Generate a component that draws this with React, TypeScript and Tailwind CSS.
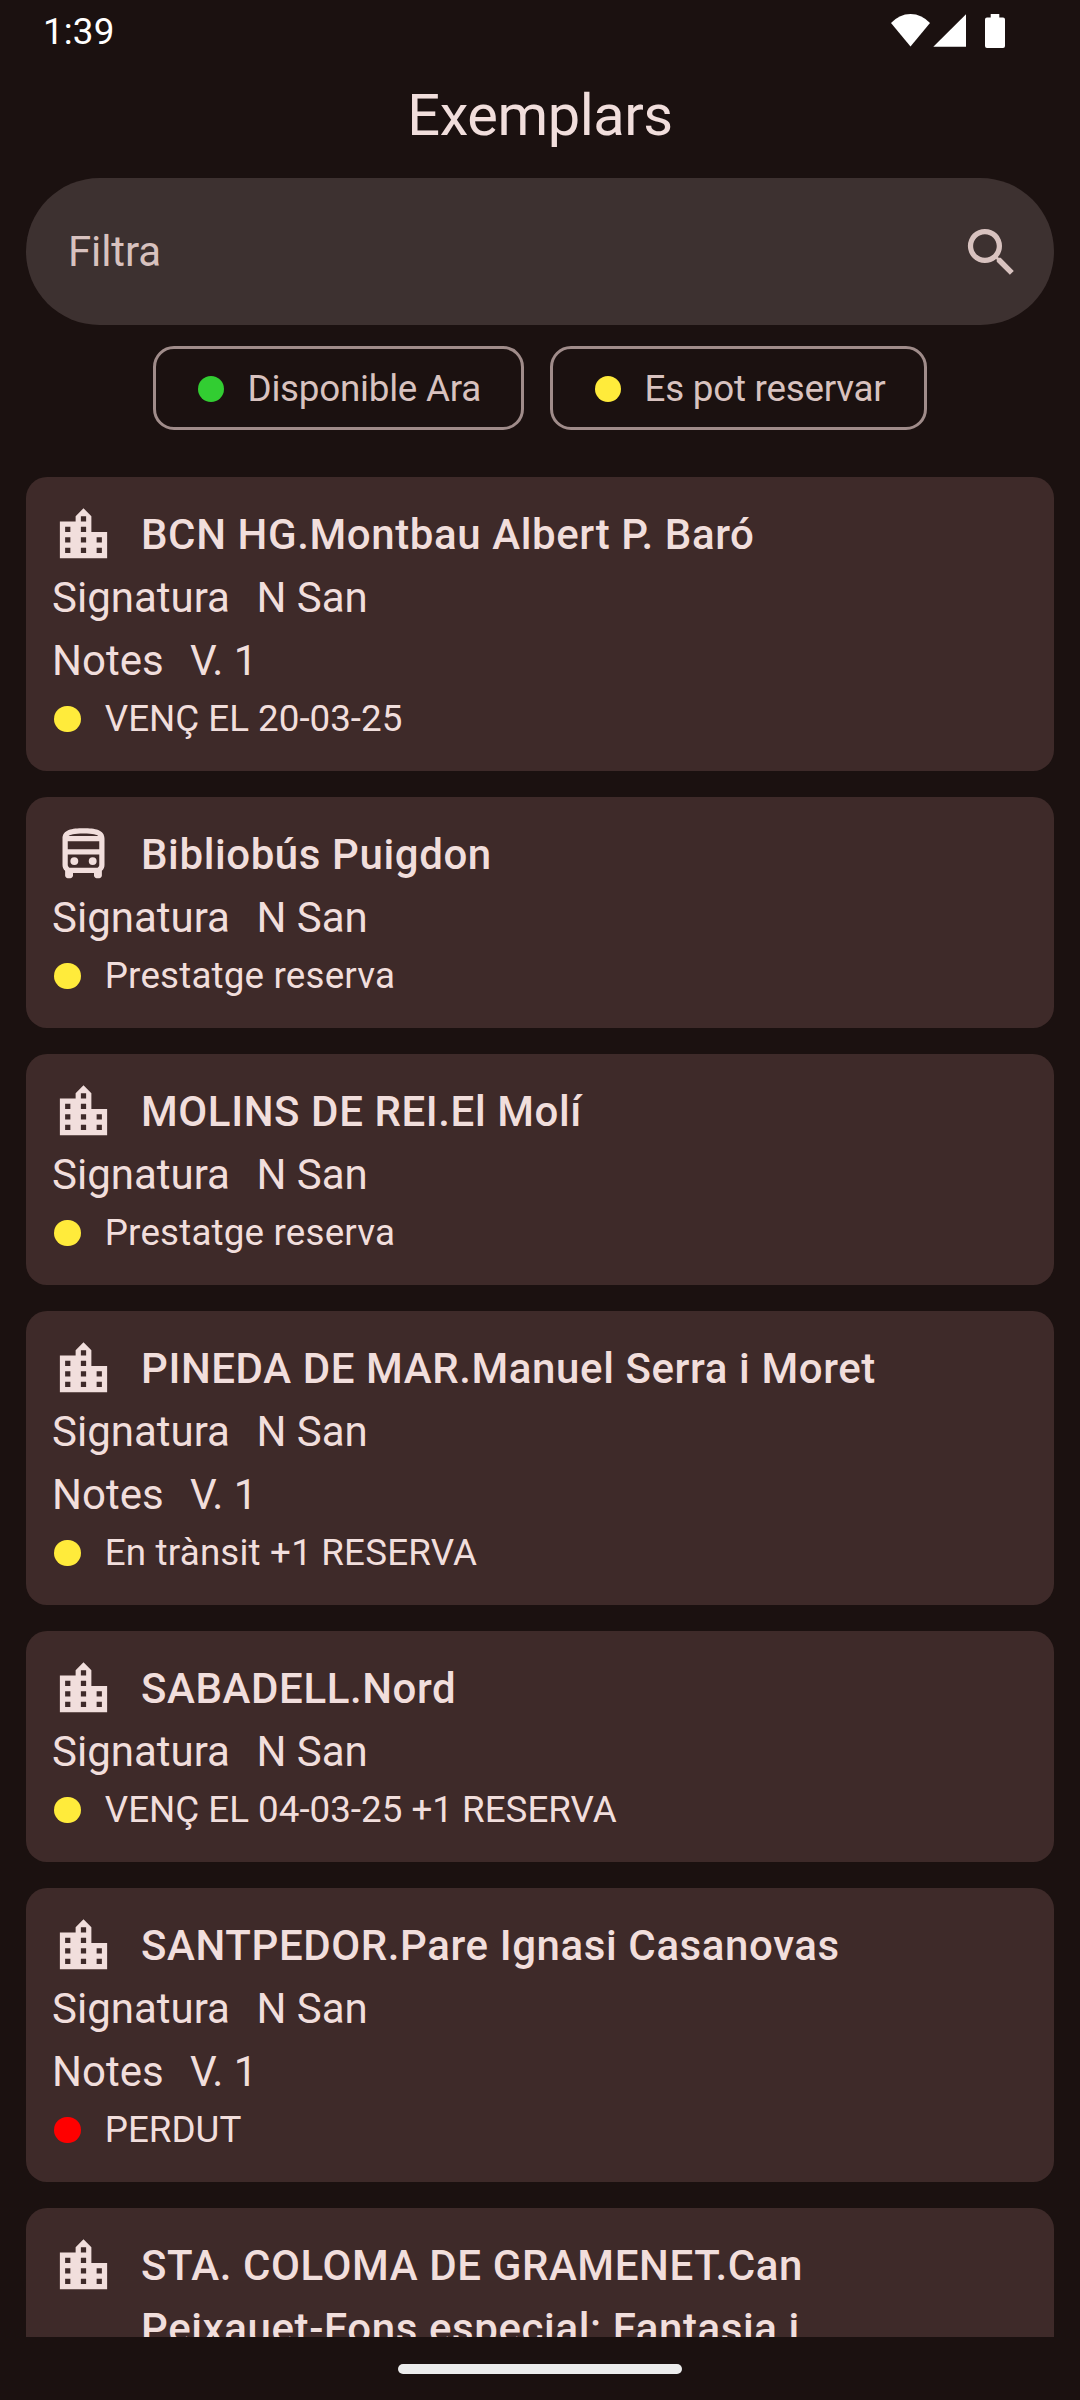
type Copy = {
  lines: string[];
  bus?: boolean;
  notes?: string;
  dot: 'yellow' | 'red';
  status: string;
};

const copies: Copy[] = [
  { lines: ['BCN HG.Montbau Albert P. Baró'], notes: 'V. 1', dot: 'yellow', status: 'VENÇ EL 20-03-25' },
  { lines: ['Bibliobús Puigdon'], bus: true, dot: 'yellow', status: 'Prestatge reserva' },
  { lines: ['MOLINS DE REI.El Molí'], dot: 'yellow', status: 'Prestatge reserva' },
  { lines: ['PINEDA DE MAR.Manuel Serra i Moret'], notes: 'V. 1', dot: 'yellow', status: 'En trànsit +1 RESERVA' },
  { lines: ['SABADELL.Nord'], dot: 'yellow', status: 'VENÇ EL 04-03-25 +1 RESERVA' },
  { lines: ['SANTPEDOR.Pare Ignasi Casanovas'], notes: 'V. 1', dot: 'red', status: 'PERDUT' },
  { lines: ['STA. COLOMA DE GRAMENET.Can', 'Peixauet-Fons especial: Fantasia i'], dot: 'yellow', status: 'Prestatge reserva' },
];

const dotColors = {
  green: 'bg-[#32cd32]',
  yellow: 'bg-[#ffeb3b]',
  red: 'bg-[#ff0000]',
};

function Dot({ color }: { color: keyof typeof dotColors }) {
  return <span className={`block size-[26.5px] shrink-0 rounded-full ${dotColors[color]}`} />;
}

function CityIcon() {
  return (
    <svg viewBox="0 0 24 24" className="size-[63px] shrink-0 fill-current">
      <path d="M15 11V5l-3-3-3 3v2H3v14h18V11h-6zm-8 8H5v-2h2v2zm0-4H5v-2h2v2zm0-4H5V9h2v2zm6 8h-2v-2h2v2zm0-4h-2v-2h2v2zm0-4h-2V9h2v2zm0-4h-2V5h2v2zm6 12h-2v-2h2v2zm0-4h-2v-2h2v2z" />
    </svg>
  );
}

function BusIcon() {
  return (
    <svg viewBox="0 0 24 24" className="size-[63px] shrink-0 fill-current">
      <path d="M12 2c-4.42 0-8 .5-8 4v10c0 .88.39 1.67 1 2.22V20c0 .55.45 1 1 1h1c.55 0 1-.45 1-1v-1h8v1c0 .55.45 1 1 1h1c.55 0 1-.45 1-1v-1.78c.61-.55 1-1.34 1-2.22V6c0-3.5-3.58-4-8-4zm5.66 2.99H6.34C6.89 4.46 8.31 4 12 4s5.11.46 5.66.99zM18 6.99V10H6V6.99h12zm-.34 9.74-.29.27H6.63l-.29-.27A.982.982 0 0 1 6 16v-4h12v4c0 .37-.21.62-.34.73z" />
      <circle cx="8.5" cy="14.5" r="1.5" />
      <circle cx="15.5" cy="14.5" r="1.5" />
    </svg>
  );
}

function StatusBar() {
  return (
    <div className="flex h-[63px] items-start justify-between pl-[43px] pr-[75px] pt-[10px] text-white">
      <span className="text-[36.75px] leading-[43px] tracking-[0.15px]">1:39</span>
      <svg viewBox="890 10 115 40" className="h-[40px] w-[115px] fill-white">
        <path d="M910.5 46.6 891 23A25.8 25.8 0 0 1 930 23Z" />
        <path d="M966 14.3V46.7H933.3Z" />
        <path d="M990.7 14h8.6v3.4h3.7a2 2 0 0 1 2 2v26.5a2 2 0 0 1-2 2h-16a2 2 0 0 1-2-2V19.4a2 2 0 0 1 2-2h3.7z" />
      </svg>
    </div>
  );
}

function Chip({ color, label, width }: { color: 'green' | 'yellow'; label: string; width: string }) {
  return (
    <div className={`flex h-[84px] items-center rounded-[21px] border-3 border-[#a08c8a] pl-[41.5px] pt-[2px] ${width}`}>
      <Dot color={color} />
      <span className="ml-[23.5px] whitespace-nowrap text-[36.75px] leading-[52px] tracking-[-0.23px] text-[#d8c2bf]">{label}</span>
    </div>
  );
}

function Field({ label, value }: { label: string; value: string }) {
  return (
    <div className="flex h-[63px] gap-[26.5px] text-[42px] leading-[63px]">
      <span>{label}</span>
      <span>{value}</span>
    </div>
  );
}

function CopyCard({ copy }: { copy: Copy }) {
  // Mixed-case statuses are set slightly looser than all-capital ones.
  const tracking = /[a-z]/.test(copy.status) ? 'tracking-[0.18px]' : 'tracking-normal';
  return (
    <div className="shrink-0 rounded-[21px] bg-[#3e2a29] px-[26px] pb-[25px] pt-[26px] text-[#f1dedc]">
      <div className="flex">
        {copy.bus ? <BusIcon /> : <CityIcon />}
        <div className="ml-[26px] text-[42px] font-medium leading-[63px] tracking-[0.6px]">
          {copy.lines.map((line) => (
            <div key={line} className="whitespace-nowrap">{line}</div>
          ))}
        </div>
      </div>
      <Field label="Signatura" value="N San" />
      {copy.notes && <Field label="Notes" value={copy.notes} />}
      <div className="flex h-[54px] items-center pl-[2.25px]">
        <Dot color={copy.dot} />
        <span className={`ml-[24px] text-[36.75px] leading-[52px] ${tracking}`}>{copy.status}</span>
      </div>
    </div>
  );
}

export default function App() {
  return (
    <div className="flex h-[2400px] w-[1080px] flex-col overflow-hidden bg-[#1b1110] font-['Roboto',sans-serif]">
      <StatusBar />
      <h1 className="h-[115px] pt-[18px] text-center text-[57.75px] leading-[68px] tracking-[-0.45px] text-[#f1dedc]">Exemplars</h1>
      <div className="mx-[26px] flex h-[147px] items-center justify-between rounded-full bg-[#3d3130] pl-[42px] pr-[31px] text-[#d8c2bf]">
        <span className="text-[42px] leading-[63px] tracking-[-0.1px]">Filtra</span>
        <svg viewBox="0 0 24 24" className="mt-[2px] size-[63px] fill-current">
          <path d="M15.5 14h-.79l-.28-.27A6.471 6.471 0 0 0 16 9.5 6.5 6.5 0 1 0 9.5 16c1.61 0 3.09-.59 4.23-1.57l.27.28v.79l5 4.99L20.49 19l-4.99-5zm-6 0C7.01 14 5 11.99 5 9.5S7.01 5 9.5 5 14 7.01 14 9.5 11.99 14 9.5 14z" />
        </svg>
      </div>
      <div className="mt-[21px] flex justify-center gap-[26px]">
        <Chip color="green" label="Disponible Ara" width="w-[371px]" />
        <Chip color="yellow" label="Es pot reservar" width="w-[377px]" />
      </div>
      <div className="mx-[26px] mt-[47px] flex h-[1860px] flex-col gap-[26px] overflow-hidden">
        {copies.map((copy) => (
          <CopyCard key={copy.lines[0]} copy={copy} />
        ))}
      </div>
      <div className="flex h-[63px] shrink-0 justify-center pt-[27px]">
        <div className="h-[10px] w-[284px] rounded-[5px] bg-[#ececec]" />
      </div>
    </div>
  );
}
